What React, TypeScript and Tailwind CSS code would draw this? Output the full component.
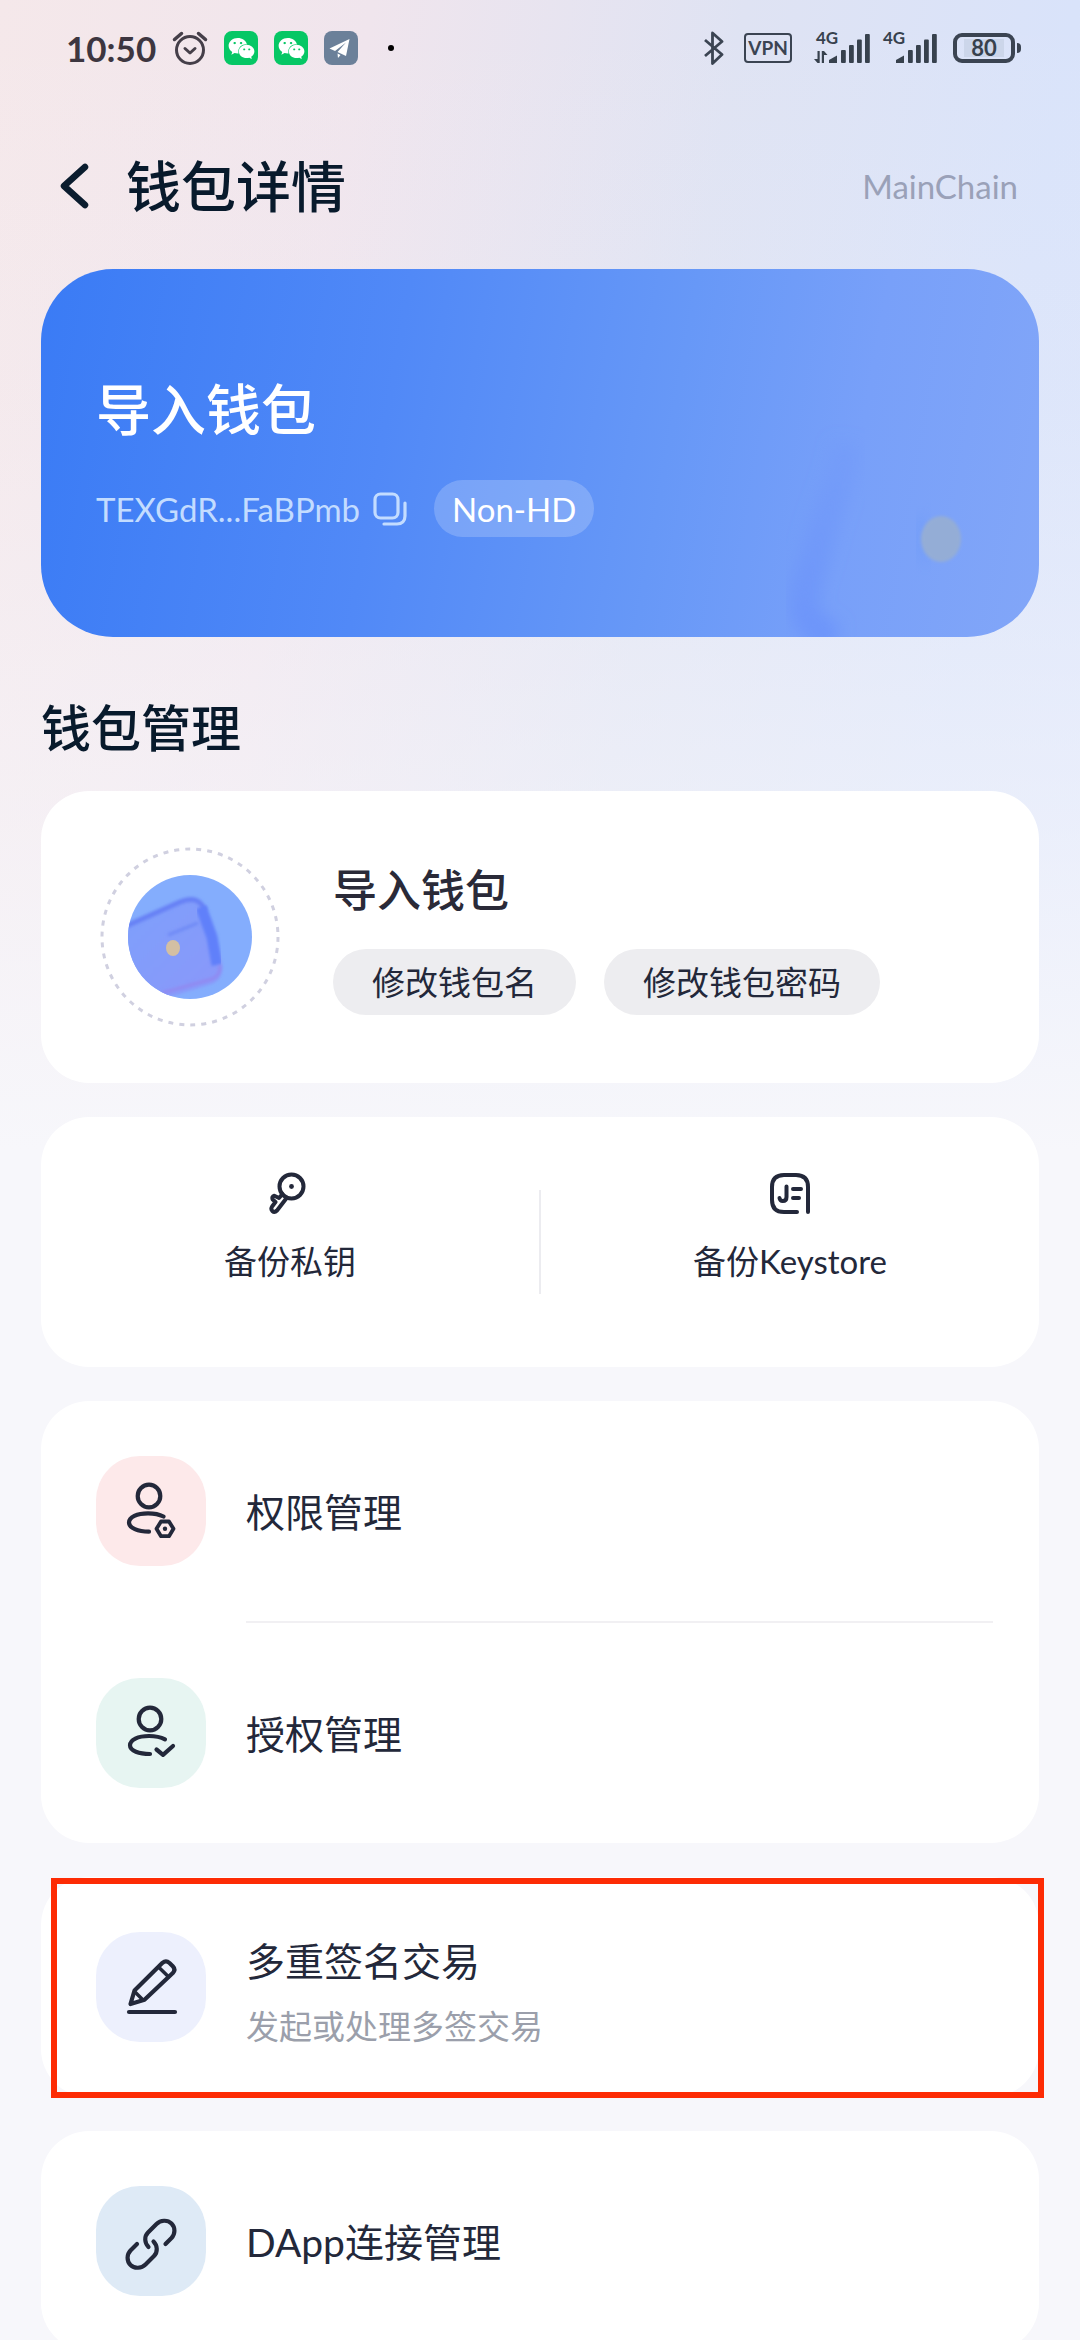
import type { ReactNode } from "react";
import { FaWeixin } from "react-icons/fa";

const INK = "#23283a";

function AlarmIcon() {
  return (
    <svg viewBox="0 0 36 36" className="size-9" fill="none" stroke="#453f49" strokeWidth="3" strokeLinecap="round" strokeLinejoin="round" aria-hidden="true">
      <circle cx="18" cy="20" r="13.5" />
      <path d="M13 18.500l5 4.500 5-4.500" />
      <path d="M2.500 9.500L9.500 3.500M33.500 9.500L26.500 3.500" strokeWidth="3.500" />
    </svg>
  );
}

function WeChatBadge() {
  return (
    <span className="flex size-[34px] items-center justify-center rounded-lg bg-[#06c765]">
      <FaWeixin className="size-[27px] text-white" aria-hidden="true" />
    </span>
  );
}

function PlaneBadge() {
  return (
    <span className="flex size-[34px] items-center justify-center rounded-lg bg-[#6b8099]">
      <svg viewBox="0 0 34 34" className="size-[34px]" fill="#fff" aria-hidden="true">
        <path d="M25.500 8L5.500 17.500l5.500 2.500L22 11.500 13.500 21l8.500 4z" />
        <path d="M13.500 22.500l3 1.500-2.500 3z" />
      </svg>
    </span>
  );
}

function BluetoothIcon() {
  return (
    <svg viewBox="0 0 20 34" className="h-[34px] w-5" fill="none" stroke="#3b4452" strokeWidth="2.800" strokeLinejoin="round" aria-hidden="true">
      <path d="M1 9l17 14.500-9.500 9V2l9.500 8.500L1 25" />
    </svg>
  );
}

function Signal({ data = false }: { data?: boolean }) {
  return (
    <svg viewBox="0 -8 56 50" className="h-[50px] w-14" fill="#37414d" role="img" aria-label="4G">
      <text x="2" y="13" fontSize="17" fontWeight="700" fontFamily="Lato, sans-serif">4G</text>
      {data && <path d="M3.500 20h2.200v12H3.500L0 28h3.500zM7.800 20H10l3.500 4H10v8H7.800z" />}
      <path d="M15 32v-3l8-4.500V32z" />
      <rect x="27" y="19" width="4.800" height="13" rx="1" />
      <rect x="35" y="14" width="4.800" height="18" rx="1" />
      <rect x="43" y="8.500" width="4.800" height="23.500" rx="1" />
      <rect x="51" y="3" width="4.800" height="29" rx="1" />
    </svg>
  );
}

function StatusBar() {
  return (
    <div className="flex h-24 items-center justify-between pr-[59px] pl-[66px]">
      <div className="flex items-center gap-4">
        <span className="text-[35px] leading-10 font-bold text-[#3d3640]">10:50</span>
        <AlarmIcon />
        <WeChatBadge />
        <WeChatBadge />
        <PlaneBadge />
        <span className="ml-[14px] size-[6px] rounded-full bg-black" />
      </div>
      <div className="flex items-center">
        <BluetoothIcon />
        <span className="mr-[22px] ml-5 flex h-[30px] w-12 items-center justify-center rounded border-2 border-[#3b4452] text-[19px] leading-6 font-bold text-[#3b4452]">
          VPN
        </span>
        <Signal data />
        <span className="w-[11px]" />
        <Signal />
        <span className="ml-4 flex h-[30px] w-[62px] items-center justify-center rounded-[9px] border-4 border-[#3b4452]">
          <span className="flex h-[18px] w-10 items-center justify-center bg-[#ccd6ea] text-[22px] leading-5 font-bold text-[#37414d]">80</span>
        </span>
        <span className="ml-[2px] h-[10px] w-1 rounded-r bg-[#3b4452]" />
      </div>
    </div>
  );
}

function WalletWatermark() {
  return (
    <svg viewBox="0 0 300 260" className="absolute right-0 bottom-0 h-[260px] w-[300px]" aria-hidden="true">
      <defs>
        <linearGradient id="edge" x1="0" y1="0" x2="0" y2="1">
          <stop offset="0" stopColor="#7097f9" stopOpacity="0.300" />
          <stop offset="1" stopColor="#6d95fa" />
        </linearGradient>
        <filter id="soft" x="-40%" y="-30%" width="180%" height="160%">
          <feGaussianBlur stdDeviation="8" />
        </filter>
        <filter id="softDot" x="-30%" y="-30%" width="160%" height="160%">
          <feGaussianBlur stdDeviation="1.500" />
        </filter>
      </defs>
      <path d="M108 65C100 115 88 130 80 165C70 200 62 215 66 235Q72 252 96 262" fill="none" stroke="url(#edge)" strokeWidth="30" filter="url(#soft)" />
      <path d="M183 140Q176 162 188 186" fill="none" stroke="#6f9bf8" strokeWidth="8" filter="url(#soft)" />
      <ellipse cx="202" cy="162" rx="20" ry="23" fill="#94add6" filter="url(#softDot)" />
    </svg>
  );
}

function CopyIcon() {
  return (
    <svg viewBox="0 0 34 34" className="size-[34px]" fill="none" stroke="#c3dcff" strokeWidth="3.200" strokeLinecap="round" strokeLinejoin="round" aria-hidden="true">
      <rect x="2" y="2" width="23" height="24" rx="5.500" />
      <path d="M32 11v13c0 5-3 8-8 8H11" />
    </svg>
  );
}

function Avatar() {
  return (
    <svg viewBox="0 0 180 180" className="size-[180px] shrink-0" aria-hidden="true">
      <defs>
        <clipPath id="disc">
          <circle cx="90" cy="90" r="62" />
        </clipPath>
        <linearGradient id="purse" x1="0" y1="0" x2="1" y2="1">
          <stop offset="0" stopColor="#7da0fb" />
          <stop offset="1" stopColor="#8a97f9" />
        </linearGradient>
        <filter id="blurSm" x="-20%" y="-20%" width="140%" height="140%">
          <feGaussianBlur stdDeviation="1.500" />
        </filter>
      </defs>
      <circle cx="90" cy="90" r="88" fill="none" stroke="#d0d0e0" strokeWidth="3" strokeDasharray="5 6.060" />
      <circle cx="90" cy="90" r="62" fill="#84adfd" />
      <g clipPath="url(#disc)">
        <path d="M20 82L80 55Q99 47 106 64L121 112Q126 134 108 138L70 150H20z" fill="url(#purse)" filter="url(#blurSm)" />
        <path d="M24 80L80 55Q99 47 105 64" fill="none" stroke="#6680f5" strokeWidth="5" filter="url(#blurSm)" />
        <path d="M101 60L112 90L117 118" fill="none" stroke="#6080fa" strokeWidth="11" filter="url(#blurSm)" />
        <path d="M68 88L98 76" fill="none" stroke="#6f8af6" strokeWidth="3" filter="url(#blurSm)" />
        <path d="M62 146L112 132Q121 128 120 118" fill="none" stroke="#9189f0" strokeWidth="3" filter="url(#blurSm)" />
      </g>
      <ellipse cx="73" cy="101" rx="7" ry="8" fill="#d3bfa3" />
    </svg>
  );
}

function KeyIcon() {
  return (
    <svg viewBox="0 0 44 44" className="size-11" fill="none" stroke={INK} strokeWidth="4" strokeLinecap="round" strokeLinejoin="round" aria-hidden="true">
      <circle cx="23.500" cy="15.500" r="12" />
      <circle cx="23.500" cy="15.500" r="2.400" fill={INK} stroke="none" />
      <path d="M19 26.500L9 39.500Q6.500 42 4.300 40Q2.500 38 4.100 35.500L7.500 31L4.700 28.500Q3.500 25.500 6.300 24.800L11 27L14.500 23" />
    </svg>
  );
}

function KeystoreIcon() {
  return (
    <svg viewBox="0 0 44 44" className="size-11" fill="none" stroke={INK} strokeWidth="4" strokeLinecap="round" strokeLinejoin="round" aria-hidden="true">
      <path d="M29 41H16Q4 41 4 29V16Q4 4 16 4H28Q40 4 40 16V41" />
      <path d="M18.500 15.500V26Q18.500 30 14.800 30Q12 30 11.500 27" />
      <path d="M25 18H33M25 27H31" />
    </svg>
  );
}

function TileSvg({ children }: { children: ReactNode }) {
  return (
    <svg viewBox="0 0 110 110" className="size-[110px]" fill="none" stroke={INK} strokeWidth="4.200" strokeLinecap="round" strokeLinejoin="round" aria-hidden="true">
      {children}
    </svg>
  );
}

function PermissionIcon() {
  return (
    <TileSvg>
      <circle cx="53" cy="40" r="11.300" />
      <path d="M67.500 60.500C63.500 58.400 58 57.300 52 57.300C41 57.300 33 61 33 66.500C33 72 42 75.700 53 75.700" />
      <path d="M65 65.500H73L77.500 72.800L73 80.200H65L60.500 72.800z" strokeWidth="3.800" />
      <circle cx="69" cy="72.800" r="2.200" fill={INK} stroke="none" />
    </TileSvg>
  );
}

function ApprovalIcon() {
  return (
    <TileSvg>
      <circle cx="54" cy="41" r="11.300" />
      <path d="M69 61.300C65 59.200 59 58 53 58C42 58 34 61.800 34 67.300C34 72.800 43 76 54 76" />
      <path d="M60.500 71.500L67 76.800L77 68" />
    </TileSvg>
  );
}

function PencilIcon() {
  return (
    <TileSvg>
      <path d="M34.500 72L38.500 58.500L66.500 30.800Q70 27.800 73.500 31L76.800 34.200Q80 37.500 76.800 41L48.500 67.800Z" />
      <path d="M63 35.500L72.500 44.800M39 60L46.500 67.500" strokeWidth="3.500" />
      <path d="M33 80H79" />
    </TileSvg>
  );
}

function LinkIcon() {
  return (
    <TileSvg>
      <path d="M52.500 61C48.500 57 48 50.500 52 46.500L60.500 38C64.500 34 71.500 33.500 75.500 37.500C79.500 41.500 79.300 48 75.500 52L69.500 58" />
      <path d="M57.500 55.500C61.500 59.500 62 66 58 70L49.500 78.500C45.500 82.500 38.500 83 34.500 79C30.500 75 30.700 68.500 34.500 64.500L41 58" />
    </TileSvg>
  );
}

function Row({ icon, tile, label, note }: { icon: ReactNode; tile: string; label: string; note?: string }) {
  return (
    <button type="button" className="flex w-full items-center gap-10 px-[55px] py-[55px] text-left">
      <span className={`size-[110px] shrink-0 rounded-[44px] ${tile}`}>{icon}</span>
      <span className={note ? "-my-1 flex flex-col gap-[26px] pt-[10px]" : "flex flex-col pt-[2px]"}>
        <span className="text-[39px] leading-[42px] text-[#23283a]">{label}</span>
        {note && <span className="text-[33px] leading-9 text-[#9b9fab]">{note}</span>}
      </span>
    </button>
  );
}

export default function App() {
  return (
    <div className="h-screen overflow-y-auto bg-[#f7f7fb] font-['Lato','Noto_Sans_CJK_SC',sans-serif] [scrollbar-width:none]">
      <div className="bg-[linear-gradient(to_bottom,rgba(247,247,251,0)_0px,rgba(247,247,251,0.15)_400px,rgba(247,247,251,0.55)_800px,rgba(247,247,251,1)_1150px),linear-gradient(100deg,#f5e8ea_0%,#f0e5ed_25%,#dfe3f3_50%,#d9e3fa_72%,#dbe4fe_100%)]">
        <StatusBar />

        <header className="flex h-[173px] items-center justify-between pt-[6px] pr-[62px] pl-[59px]">
          <div className="flex items-center gap-[37px]">
            <button type="button" aria-label="返回">
              <svg viewBox="0 0 30 46" className="h-[46px] w-[30px]" fill="none" stroke="#0a1c2e" strokeWidth="6.500" strokeLinecap="round" strokeLinejoin="round" aria-hidden="true">
                <path d="M26 4L5 23L26 42" />
              </svg>
            </button>
            <h1 className="text-[55px] leading-[72px] font-medium text-[#081a2c]">钱包详情</h1>
          </div>
          <span className="text-[33px] leading-10 text-[#9aa1b8]">MainChain</span>
        </header>

        <main className="flex flex-col px-[41px]">
          <section className="relative overflow-hidden rounded-[72px] bg-[linear-gradient(100deg,#3a7bf5_0%,#5189f7_35%,#6798f7_62%,#78a0f9_80%,#82a6f8_100%)] px-[55px] pt-[104px] pb-[100px] text-white">
            <WalletWatermark />
            <h2 className="text-[55px] leading-[72px] font-medium">导入钱包</h2>
            <div className="mt-[35px] flex items-center">
              <span className="text-[33px] leading-10 text-[#c3dcff]">TEXGdR...FaBPmb</span>
              <button type="button" aria-label="复制地址" className="ml-[13px]">
                <CopyIcon />
              </button>
              <span className="ml-[27px] flex h-[57px] items-center rounded-full bg-white/20 px-[18px] text-[33px] leading-10">Non-HD</span>
            </div>
          </section>

          <h2 className="mt-[55px] mb-[27px] text-[50px] leading-[72px] font-medium text-[#081a2c]">钱包管理</h2>

          <div className="flex flex-col gap-[34px]">
            <section className="flex items-center gap-[53px] rounded-[48px] bg-white px-[59px] py-[56px]">
              <Avatar />
              <div className="flex flex-col gap-[31px] pt-[2px]">
                <h3 className="text-[44px] leading-[56px] font-medium text-[#2a2a38]">导入钱包</h3>
                <div className="flex gap-[28px]">
                  <button type="button" className="h-[66px] rounded-full bg-[#ededf0] px-[39px] text-[33px] leading-10 text-[#23283a]">修改钱包名</button>
                  <button type="button" className="h-[66px] rounded-full bg-[#ededf0] px-[39px] text-[33px] leading-10 text-[#23283a]">修改钱包密码</button>
                </div>
              </div>
            </section>

            <section className="flex items-center rounded-[48px] bg-white">
              <button type="button" className="flex flex-1 flex-col items-center gap-[22px] pt-[54px] pb-[82px]">
                <KeyIcon />
                <span className="text-[33px] leading-[48px] text-[#23283a]">备份私钥</span>
              </button>
              <span className="h-[104px] w-[2px] bg-[#ececf0]" />
              <button type="button" className="flex flex-1 flex-col items-center gap-[22px] pt-[54px] pb-[82px]">
                <KeystoreIcon />
                <span className="text-[33px] leading-[48px] text-[#23283a]">备份Keystore</span>
              </button>
            </section>

            <section className="flex flex-col rounded-[48px] bg-white">
              <Row icon={<PermissionIcon />} tile="bg-[#fde9ea]" label="权限管理" />
              <hr className="mr-[46px] ml-[205px] border-t-2 border-[#f1f0f3]" />
              <Row icon={<ApprovalIcon />} tile="bg-[#e7f5f2]" label="授权管理" />
            </section>

            <section className="relative rounded-[48px] bg-white">
              <Row icon={<PencilIcon />} tile="bg-[#edf0fd]" label="多重签名交易" note="发起或处理多签交易" />
              <span className="pointer-events-none absolute top-[1px] -right-[5px] -bottom-[1px] left-[10px] border-[6px] border-[#fd2b04]" />
            </section>

            <section className="rounded-[48px] bg-white">
              <Row icon={<LinkIcon />} tile="bg-[#deeaf6]" label="DApp连接管理" />
            </section>
          </div>
        </main>
      </div>
    </div>
  );
}
